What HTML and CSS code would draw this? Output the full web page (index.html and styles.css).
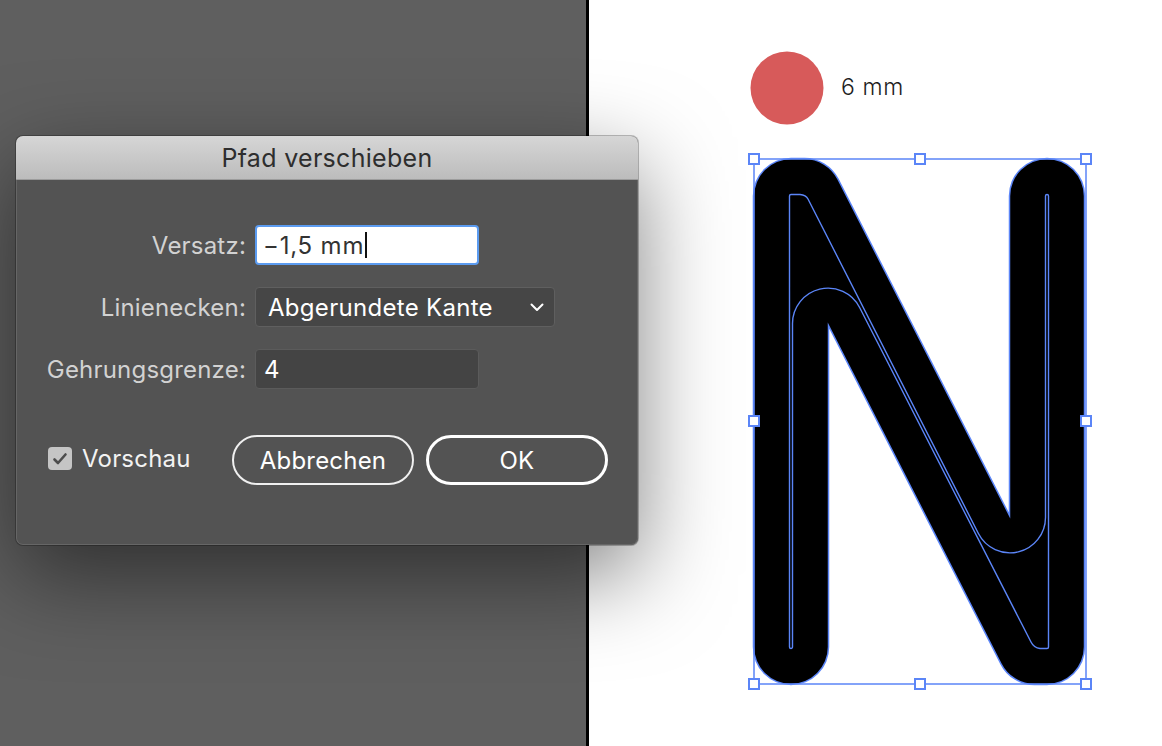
FILE: index.html
```html
<!DOCTYPE html>
<html lang="de">
<head>
<meta charset="utf-8">
<title>Pfad verschieben</title>
<link rel="stylesheet" href="styles.css">
</head>
<body>
<div class="app">
  <div class="panel"></div>
  <div class="divider"></div>
  <div class="canvas">
    <svg class="art" width="573" height="746" viewBox="589 0 573 746" xmlns="http://www.w3.org/2000/svg">
      <circle cx="787" cy="88" r="36.5" fill="#d75a5a"/>
      <text x="841" y="95" class="dim">6 mm</text>
      <g fill="none" stroke-linejoin="round" stroke-linecap="round">
        <path d="M791,647 V196 H804.5 L1034.5,647 H1047 V196" stroke="#5b85f7" stroke-width="76.5"/>
        <path d="M791,647 V196 H804.5 L1034.5,647 H1047 V196" stroke="#000" stroke-width="73.5"/>
      </g>
      <path fill="none" stroke="#5b85f7" stroke-width="1.4"
        d="M789.5,647 V196 A1.5,1.5 0 0 1 791,194.5 H800 Q806,195 808,199 L978.4,533.5 A35.5,35.5 0 0 0 1045.5,517.4 V196 A1.5,1.5 0 0 1 1048.5,196 V647 A1.5,1.5 0 0 1 1047,648.5 H1040 Q1034,648 1031,642 L859.6,307.5 A35.5,35.5 0 0 0 792.5,323.6 V647 A1.5,1.5 0 0 1 789.5,647 Z"/>
      <rect x="754" y="159" width="332" height="525" fill="none" stroke="#5b85f7" stroke-width="1.5"/>
      <g fill="#fff" stroke="#5b85f7" stroke-width="2">
        <rect x="749" y="154" width="10" height="10"/>
        <rect x="915" y="154" width="10" height="10"/>
        <rect x="1081" y="154" width="10" height="10"/>
        <rect x="749" y="416" width="10" height="10"/>
        <rect x="1081" y="416" width="10" height="10"/>
        <rect x="749" y="679" width="10" height="10"/>
        <rect x="915" y="679" width="10" height="10"/>
        <rect x="1081" y="679" width="10" height="10"/>
      </g>
    </svg>
  </div>

  <div class="dialog">
    <div class="titlebar">Pfad verschieben</div>
    <div class="dialog-body">
      <div class="form">
        <label class="label">Versatz:</label>
        <div class="field field-focus"><span class="value-wide">−1,5 mm</span><span class="caret"></span></div>
        <label class="label">Linienecken:</label>
        <div class="field field-select">
          <span>Abgerundete Kante</span>
          <svg class="chevron" width="14" height="9" viewBox="0 0 14 9"><polyline points="1.5,1.5 7,7 12.5,1.5" fill="none" stroke="#fff" stroke-width="2" stroke-linecap="round" stroke-linejoin="round"/></svg>
        </div>
        <label class="label">Gehrungsgrenze:</label>
        <div class="field field-dark"><span>4</span></div>
      </div>
      <div class="actions">
        <div class="check">
          <span class="checkbox"><svg width="16" height="14" viewBox="0 0 16 14"><polyline points="2.5,7.5 6,11 13.5,2.5" fill="none" stroke="#4d4d4d" stroke-width="2.6" stroke-linecap="round" stroke-linejoin="round"/></svg></span>
          <span class="check-label">Vorschau</span>
        </div>
        <button class="btn">Abbrechen</button>
        <button class="btn btn-primary">OK</button>
      </div>
    </div>
  </div>
</div>
</body>
</html>
```
FILE: styles.css
```css
* { box-sizing: border-box; }
html, body { margin: 0; padding: 0; }
body {
  width: 1162px;
  height: 746px;
  overflow: hidden;
  font-family: Inter, "Noto Sans", sans-serif;
}
.app {
  position: relative;
  display: flex;
  width: 1162px;
  height: 746px;
}
.panel {
  width: 586px;
  background: #5f5f5f;
}
.divider {
  width: 3px;
  background: #000;
}
.canvas {
  flex: 1;
  background: #fff;
}
.art { display: block; }
.dim {
  font-family: Inter, "Noto Sans", sans-serif;
  font-size: 23px;
  font-weight: 300;
  fill: #1e1e1e;
  letter-spacing: 0.6px;
}

.dialog {
  position: absolute;
  left: 16px;
  top: 136px;
  width: 622px;
  height: 409px;
  border-radius: 7px;
  background: #535353;
  box-shadow: 0 0 0 1px rgba(0,0,0,0.25), 0 30px 90px rgba(0,0,0,0.5);
  overflow: hidden;
  display: flex;
  flex-direction: column;
}
.titlebar {
  height: 44px;
  background: linear-gradient(#d6d6d6, #bcbcbc);
  border-bottom: 1px solid #9c9c9c;
  color: #2e2e2e;
  font-size: 25px;
  text-align: center;
  line-height: 44px;
  letter-spacing: 0.3px;
}
.dialog-body {
  flex: 1;
  padding: 45px 0 0 0;
  border: 1px solid #666;
  border-top: none;
  border-radius: 0 0 7px 7px;
}
.form {
  display: grid;
  grid-template-columns: 229px auto;
  column-gap: 9px;
  row-gap: 22px;
  align-items: center;
  justify-items: start;
}
.label {
  justify-self: end;
  color: #d2d2d2;
  font-size: 24px;
  letter-spacing: 0.2px;
}
.field {
  height: 40px;
  width: 224px;
  border-radius: 4px;
  display: flex;
  align-items: center;
  padding: 0 8px;
  font-size: 24px;
  letter-spacing: 0.3px;
}
.field-focus {
  background: #fff;
  color: #333;
  border: 2px solid #5b9bf0;
  padding-left: 6px;
}
.value-wide { letter-spacing: 0.8px; }
.caret {
  display: inline-block;
  width: 2px;
  height: 26px;
  background: #111;
  margin-left: 1px;
}
.field-select {
  width: 300px;
  background: #464646;
  border: 1px solid #5f5f5f;
  color: #fff;
  justify-content: space-between;
  padding: 0 10px 0 12px;
}
.chevron { display: block; }
.field-dark {
  background: #444;
  border: 1px solid #5b5b5b;
  color: #fff;
}
.actions {
  display: flex;
  align-items: center;
  margin-top: 46px;
  padding-left: 31px;
}
.check {
  display: flex;
  align-items: center;
  width: 184px;
  margin-top: -3px;
}
.checkbox {
  width: 24px;
  height: 23px;
  border-radius: 4px;
  background: #c5c5c5;
  display: flex;
  align-items: center;
  justify-content: center;
  margin-right: 10px;
}
.check-label {
  color: #f2f2f2;
  font-size: 24px;
  letter-spacing: 0.2px;
}
.btn {
  font-family: Inter, "Noto Sans", sans-serif;
  width: 182px;
  height: 50px;
  border-radius: 25px;
  border: 2px solid #f0f0f0;
  background: transparent;
  color: #fff;
  font-size: 24px;
  letter-spacing: 0.2px;
  padding: 0;
  margin-right: 12px;
}
.btn-primary {
  border: 3px solid #fff;
}
```
